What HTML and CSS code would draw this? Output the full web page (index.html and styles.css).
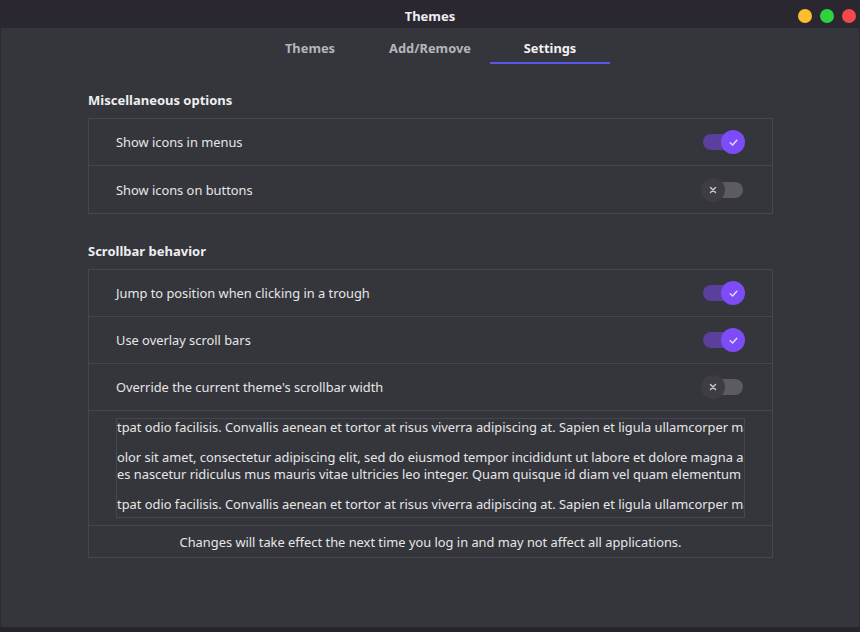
FILE: index.html
```html
<!DOCTYPE html>
<html>
<head>
<meta charset="utf-8">
<link rel="stylesheet" href="styles.css">
</head>
<body>
<div class="window">
  <header class="titlebar">
    <span class="title">Themes</span>
    <div class="controls">
      <span class="dot yellow"></span>
      <span class="dot green"></span>
      <span class="dot red"></span>
    </div>
  </header>
  <nav class="tabs">
    <div class="tab">Themes</div>
    <div class="tab">Add/Remove</div>
    <div class="tab active">Settings</div>
  </nav>
  <main class="content">
    <h2 class="heading">Miscellaneous options</h2>
    <div class="list">
      <div class="row"><span>Show icons in menus</span><span class="switch on"><span class="knob"><svg viewBox="0 0 10 10" width="11" height="11"><path d="M2 5.2 L4.2 7.2 L8 3" fill="none" stroke="#e6dcff" stroke-width="1.3" stroke-linecap="round" stroke-linejoin="round"/></svg></span></span></div>
      <div class="row"><span>Show icons on buttons</span><span class="switch off"><span class="knob"><svg viewBox="0 0 10 10" width="10" height="10"><path d="M2.5 2.5 L7.5 7.5 M7.5 2.5 L2.5 7.5" fill="none" stroke="#c8c8cc" stroke-width="1.5" stroke-linecap="round"/></svg></span></span></div>
    </div>
    <h2 class="heading second">Scrollbar behavior</h2>
    <div class="list">
      <div class="row"><span>Jump to position when clicking in a trough</span><span class="switch on"><span class="knob"><svg viewBox="0 0 10 10" width="11" height="11"><path d="M2 5.2 L4.2 7.2 L8 3" fill="none" stroke="#e6dcff" stroke-width="1.3" stroke-linecap="round" stroke-linejoin="round"/></svg></span></span></div>
      <div class="row"><span>Use overlay scroll bars</span><span class="switch on"><span class="knob"><svg viewBox="0 0 10 10" width="11" height="11"><path d="M2 5.2 L4.2 7.2 L8 3" fill="none" stroke="#e6dcff" stroke-width="1.3" stroke-linecap="round" stroke-linejoin="round"/></svg></span></span></div>
      <div class="row"><span>Override the current theme's scrollbar width</span><span class="switch off"><span class="knob"><svg viewBox="0 0 10 10" width="10" height="10"><path d="M2.5 2.5 L7.5 7.5 M7.5 2.5 L2.5 7.5" fill="none" stroke="#c8c8cc" stroke-width="1.5" stroke-linecap="round"/></svg></span></span></div>
      <div class="preview-row">
        <div class="preview">
          <p>tpat odio facilisis. Convallis aenean et tortor at risus viverra adipiscing at. Sapien et ligula ullamcorper ma</p>
          <p class="gap"></p>
          <p>olor sit amet, consectetur adipiscing elit, sed do eiusmod tempor incididunt ut labore et dolore magna alic</p>
          <p>es nascetur ridiculus mus mauris vitae ultricies leo integer. Quam quisque id diam vel quam elementum pu</p>
          <p class="gap"></p>
          <p>tpat odio facilisis. Convallis aenean et tortor at risus viverra adipiscing at. Sapien et ligula ullamcorper ma</p>
        </div>
      </div>
      <div class="footer-row">Changes will take effect the next time you log in and may not affect all applications.</div>
    </div>
  </main>
</div>
</body>
</html>
```
FILE: styles.css
```css
* { box-sizing: border-box; margin: 0; padding: 0; }
html, body { width: 860px; height: 632px; overflow: hidden; background: #26262a; }
body {
  font-family: "Noto Sans", "DejaVu Sans", sans-serif;
  font-size: 12.85px;
  color: #e6e6e8;
}
.window {
  width: 860px;
  height: 627px;
  background: #35363b;
  box-shadow: inset 1px 0 0 #2a2a2f, inset -1px 0 0 #2a2a2f;
  display: flex;
  flex-direction: column;
}
.titlebar {
  height: 28px;
  padding-top: 4px;
  background: #2b2730;
  border-bottom: 1px solid #2a2a30;
  display: flex;
  align-items: center;
  justify-content: center;
  position: relative;
}
.title { font-weight: bold; font-size: 13px; color: #efedf2; }
.controls {
  position: absolute;
  right: 4px;
  top: 9px;
  display: flex;
  gap: 8px;
}
.dot { width: 14px; height: 14px; border-radius: 50%; display: block; }
.yellow { background: #fdbd2e; }
.green { background: #2ed23f; }
.red { background: #f4484f; }
.tabs {
  display: flex;
  justify-content: center;
  height: 36px;
}
.tab {
  width: 120px;
  text-align: center;
  font-weight: bold;
  color: #b3b5bb;
  padding-top: 11px;
  border-bottom: 2px solid transparent;
}
.tab.active { color: #f0f0f2; border-bottom-color: #5b57ec; }
.content { padding: 27px 87px 0 88px; }
.heading { font-size: 13px; font-weight: bold; color: #eeeef0; line-height: 18px; margin-bottom: 9px; }
.heading.second { margin-top: 28px; }
.list { border: 1px solid #46474c; }
.row {
  height: 47px;
  display: flex;
  align-items: center;
  justify-content: space-between;
  padding: 0 29px 0 27px;
  border-bottom: 1px solid #46474c;
}
.list > :last-child { border-bottom: none; }
.switch {
  width: 40px;
  height: 16px;
  border-radius: 8px;
  position: relative;
}
.switch.on { background: #5a3f9c; }
.switch.off { background: #5b5b60; }
.knob {
  position: absolute;
  top: -4px;
  width: 24px;
  height: 24px;
  border-radius: 50%;
  display: flex;
  align-items: center;
  justify-content: center;
}
.switch.on .knob { right: -2px; background: #7d4cf8; }
.switch.off .knob { left: -2px; background: #3d3d42; }
.preview-row {
  padding: 7px 27px 7px 27px;
  border-bottom: 1px solid #46474c;
}
.preview {
  border: 1px solid #46474c;
  height: 100px;
  overflow: hidden;
  white-space: nowrap;
}
.preview p { line-height: 17px; }
.preview p.gap { height: 13px; }
.footer-row {
  height: 31px;
  display: flex;
  align-items: center;
  justify-content: center;
}
```
